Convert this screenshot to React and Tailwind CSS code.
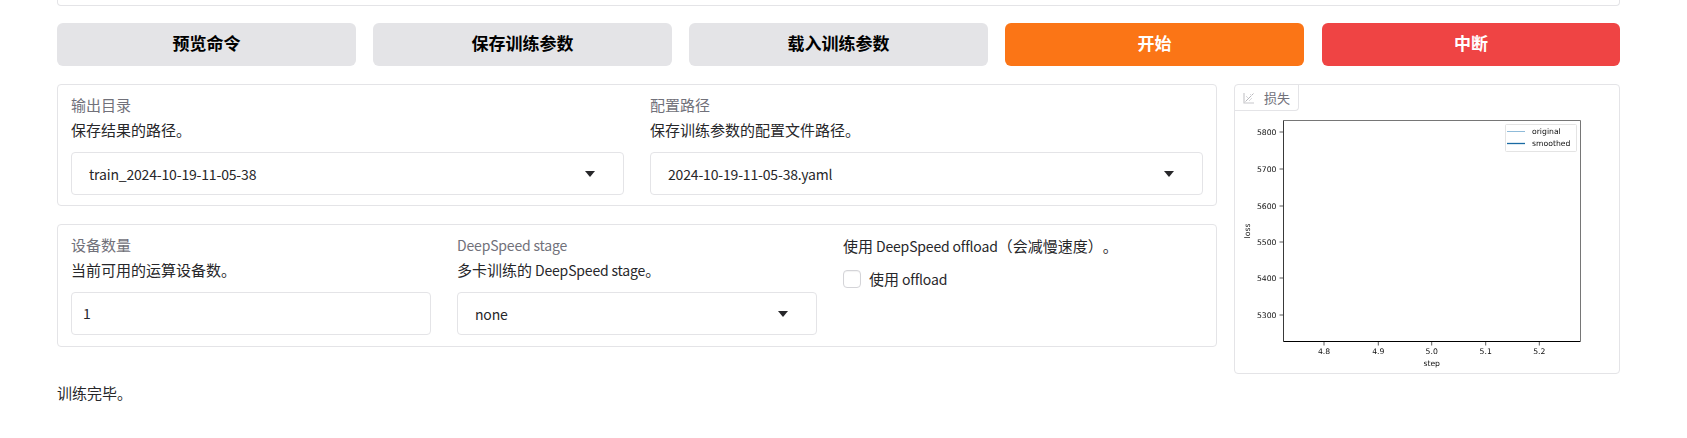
const font = { fontFamily: '"Noto Sans CJK SC", sans-serif' };

// The reference sets Latin smaller and tighter than the CJK around it.
function T({ children }) {
  const parts = children.split(/([\x00-\x7f]+)/).filter(Boolean);
  return (
    <>
      {parts.map((p, i) =>
        /^[\x00-\x7f]/.test(p) ? (
          <span key={i} className="text-[14px] leading-none tracking-[-0.17px]">{p}</span>
        ) : (
          <span key={i} className="leading-none">{p}</span>
        )
      )}
    </>
  );
}

function Arrow() {
  return (
    <svg width="10" height="6" viewBox="0 0 10 6" className="shrink-0 block">
      <path d="M0 0 H10 L5 6 Z" fill="#27272a" />
    </svg>
  );
}

function Select({ value }) {
  return (
    <div className="h-[43px] border border-[#e4e4e7] rounded-[4px] bg-white flex items-center justify-between pl-[17px] pr-[28px] leading-[21px] text-[#27272a]">
      <span className="block -mt-[1px]"><T>{value}</T></span>
      <Arrow />
    </div>
  );
}

function Field({ label, info, children }) {
  return (
    <div className="flex-1 min-w-0">
      <div className="text-[15px] leading-[21px] text-[#71717a]"><T>{label}</T></div>
      <div className="mt-[4px] mb-[12px] text-[15px] leading-[21px] text-[#27272a]"><T>{info}</T></div>
      {children}
    </div>
  );
}

function Chart() {
  const yTicks = [[5800, 21], [5700, 58], [5600, 95], [5500, 131], [5400, 167], [5300, 204]];
  const xTicks = [['4.8', 89], ['4.9', 143.3], ['5.0', 196.7], ['5.1', 250.7], ['5.2', 304.3]];
  const tickText = { fontFamily: '"DejaVu Sans", sans-serif', fontSize: 7.7, fill: '#111' };
  return (
    <svg width="384" height="262" viewBox="0 0 384 262" className="block blur-[0.25px]">
      <path d="M48.5 9.5 H345.5 V230" fill="none" stroke="#666" strokeWidth="0.9" />
      <path d="M48.5 9.5 V230.5" fill="none" stroke="#222" strokeWidth="0.9" />
      <path d="M48.5 230.5 H345.5" fill="none" stroke="#000" strokeWidth="1" />
      {yTicks.map(([v, y]) => (
        <g key={v}>
          <path d={`M44.5 ${y} H48`} stroke="#333" strokeWidth="0.8" />
          <text x="41.5" y={y + 2.8} textAnchor="end" style={tickText}>{v}</text>
        </g>
      ))}
      {xTicks.map(([v, x]) => (
        <g key={v}>
          <path d={`M${x} 231 V234.5`} stroke="#333" strokeWidth="0.8" />
          <text x={x} y="243" textAnchor="middle" style={tickText}>{v}</text>
        </g>
      ))}
      <text x="196.7" y="254.5" textAnchor="middle" style={tickText}>step</text>
      <text transform="translate(15 120) rotate(-90)" textAnchor="middle" style={tickText}>loss</text>
      <rect x="270.5" y="13.5" width="71" height="27" fill="#fff" stroke="#ddd" strokeWidth="0.8" rx="1" />
      <path d="M272 20.5 H290" stroke="#1f77b4" strokeOpacity="0.5" strokeWidth="1" />
      <path d="M272 32.5 H290" stroke="#1a6aa3" strokeWidth="1.3" />
      <text x="297" y="23" style={tickText}>original</text>
      <text x="297" y="35" style={tickText}>smoothed</text>
    </svg>
  );
}

function PlotCard() {
  return (
    <div className="w-[386px] shrink-0 h-[290px] border border-[#e4e4e7] rounded-[4px] bg-white overflow-hidden">
      <div className="w-fit h-[26px] flex items-center gap-[9px] pl-[8px] pr-[8px] border-r border-b border-[#e4e4e7] rounded-br-[4px] text-[13px] leading-[21px] text-[#71717a]">
        <svg width="12" height="12" viewBox="0 0 12 12" fill="none" className="block">
          <path d="M1 1 V11 H11" stroke="#c8c8cc" strokeWidth="1.2" />
          <path d="M2.5 9.5 L10.5 1.5" stroke="#b8b8bc" strokeWidth="1" />
          <path d="M3 4 L5 6 M6 9 L9 6 M7 2 L9 4" stroke="#d8d8dc" strokeWidth="1" />
        </svg>
        <span>损失</span>
      </div>
      <Chart />
    </div>
  );
}

function Btn({ children, cls }) {
  return (
    <button className={`h-[43px] pb-[3px] rounded-[6px] text-[17px] font-bold ${cls}`}>{children}</button>
  );
}

export default function App() {
  return (
    <div style={font} className="w-[1687px] h-[438px] overflow-hidden bg-white pl-[57px] pr-[67px] [text-spacing-trim:space-all] text-[15px]">
      <div className="h-[6px] border-x border-b border-[#e4e4e7] rounded-b-[4px]" />
      <div className="flex gap-[17px] mt-[17px]">
        <Btn cls="w-[299px] bg-[#e4e4e7] text-black">预览命令</Btn>
        <Btn cls="w-[299px] bg-[#e4e4e7] text-black">保存训练参数</Btn>
        <Btn cls="w-[299px] bg-[#e4e4e7] text-black">载入训练参数</Btn>
        <Btn cls="w-[299px] bg-[#fb7516] text-white">开始</Btn>
        <Btn cls="w-[298px] ml-[1px] bg-[#ef4444] text-white">中断</Btn>
      </div>
      <div className="flex gap-[17px] mt-[18px]">
        <div className="flex-1 min-w-0 flex flex-col gap-[18px]">
          <div className="border border-[#e4e4e7] rounded-[4px] bg-white pt-[9px] px-[13px] pb-[10px] flex gap-[26px]">
            <Field label="输出目录" info="保存结果的路径。">
              <Select value="train_2024-10-19-11-05-38" />
            </Field>
            <Field label="配置路径" info="保存训练参数的配置文件路径。">
              <Select value="2024-10-19-11-05-38.yaml" />
            </Field>
          </div>
          <div className="border border-[#e4e4e7] rounded-[4px] bg-white pt-[9px] px-[13px] pb-[11px] flex gap-[26px]">
            <Field label="设备数量" info="当前可用的运算设备数。">
              <div className="h-[43px] border border-[#e4e4e7] rounded-[4px] bg-white flex items-center pl-[11px] text-[#27272a]">
                <span className="block -mt-[1px]"><T>1</T></span>
              </div>
            </Field>
            <Field label="DeepSpeed stage" info="多卡训练的 DeepSpeed stage。">
              <Select value="none" />
            </Field>
            <div className="flex-1 min-w-0">
              <div className="mt-[1px] text-[15px] leading-[21px] text-[#27272a]"><T>使用 DeepSpeed offload（会减慢速度）。</T></div>
              <div className="mt-[13px] flex items-center gap-[8px]">
                <div className="w-[18px] h-[18px] rounded-[4px] border border-[#d4d4d8] bg-white shadow-[inset_0_1px_1px_rgba(0,0,0,0.05)]" />
                <span className="block -mt-[1px] text-[15px] leading-[21px] text-[#27272a]"><T>使用 offload</T></span>
              </div>
            </div>
          </div>
        </div>
        <PlotCard />
      </div>
      <div className="mt-[8px] text-[15px] leading-[21px] text-[#27272a]">训练完毕。</div>
    </div>
  );
}
